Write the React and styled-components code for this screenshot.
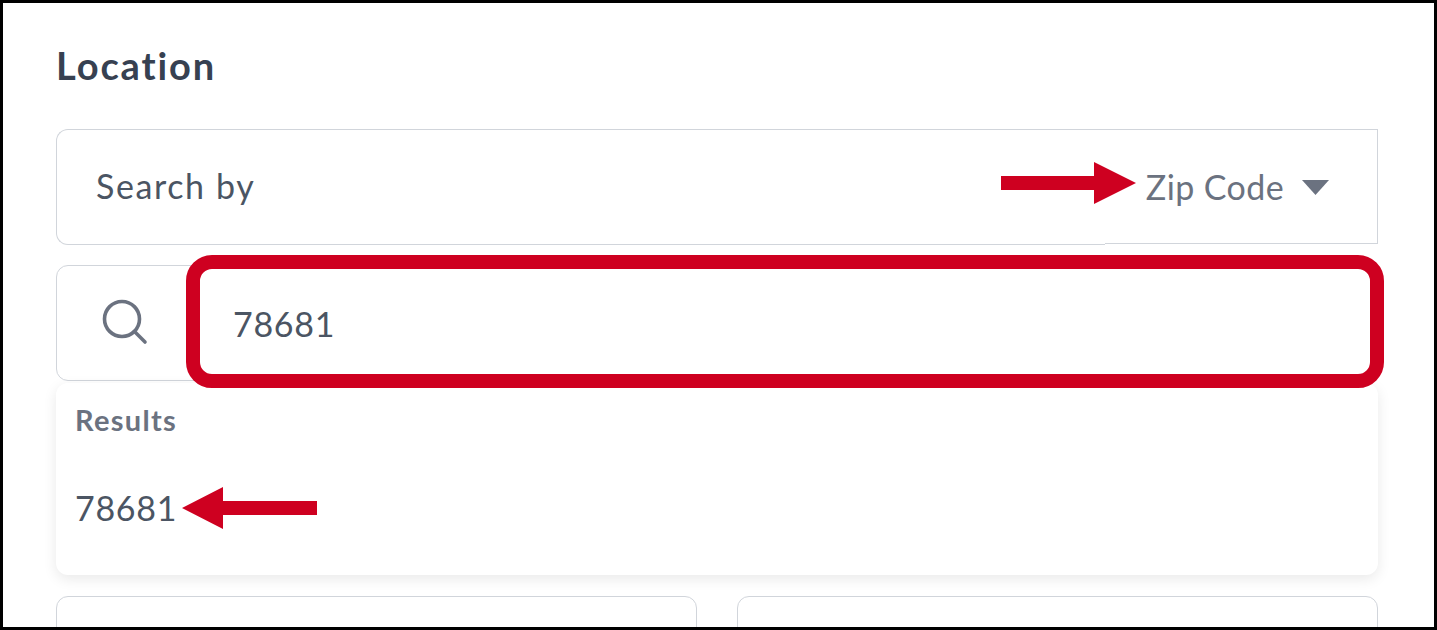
import React from "react";
import styled, { createGlobalStyle } from "styled-components";

const Global = createGlobalStyle`
  html, body { margin: 0; padding: 0; background: #fff; }
  body { font-family: "Lato", "Open Sans", sans-serif; }
`;

const Frame = styled.div`
  position: relative;
  box-sizing: border-box;
  width: 1437px;
  height: 630px;
  border: 3px solid #000;
  background: #fff;
  overflow: hidden;
  padding: 39px 56px 0 53px;
`;

const Heading = styled.h2`
  margin: 0 0 40px;
  height: 47px;
  font-size: 38px;
  line-height: 47px;
  font-weight: 700;
  color: #374151;
  letter-spacing: 1.9px;
`;

const SearchByRow = styled.div`
  display: flex;
  align-items: flex-start;
  height: 116px;
  margin-bottom: 20px;
`;

const SearchByLabel = styled.div`
  box-sizing: border-box;
  width: 1049px;
  height: 116px;
  border: 1.5px solid #d1d5db;
  border-right: none;
  border-radius: 12px 0 0 12px;
  padding: 0 0 3px 39px;
  display: flex;
  align-items: center;
  font-size: 34px;
  letter-spacing: 1.6px;
  color: #4b5563;
`;

const SearchBySelect = styled.div`
  box-sizing: border-box;
  flex: 1;
  height: 115px;
  border: 1.5px solid #d1d5db;
  border-left: none;
  display: flex;
  align-items: center;
  justify-content: flex-end;
  gap: 18px;
  padding: 0 48px 1px 0;
  font-size: 34px;
  letter-spacing: 0.4px;
  color: #6b7280;
`;

const Caret = styled.svg`
  width: 27px;
  height: 15px;
  margin-top: 3px;
  fill: #6b7280;
`;

const SearchRow = styled.div`
  box-sizing: border-box;
  display: flex;
  align-items: center;
  height: 116px;
  border: 1.5px solid #d1d5db;
  border-radius: 12px;
  margin-bottom: 2px;
`;

const SearchIcon = styled.svg`
  width: 52px;
  height: 52px;
  margin-left: 41px;
  margin-right: 83px;
  flex: none;
`;

const SearchValue = styled.div`
  font-size: 34px;
  letter-spacing: 0.7px;
  color: #4b5563;
`;

const Dropdown = styled.div`
  box-sizing: border-box;
  height: 192px;
  background: #fff;
  border-radius: 12px;
  box-shadow: 0 4px 14px rgba(0, 0, 0, 0.09);
  padding: 18px 20px 0 19px;
  margin-bottom: 21px;
  position: relative;
`;

const ResultsLabel = styled.div`
  font-size: 29px;
  line-height: 38px;
  font-weight: 700;
  letter-spacing: 1.3px;
  color: #6b7280;
  margin-bottom: 50px;
`;

const ResultItem = styled.div`
  font-size: 34px;
  line-height: 38px;
  letter-spacing: 0.7px;
  color: #4b5563;
`;

const FieldGrid = styled.div`
  display: grid;
  grid-template-columns: 1fr 1fr;
  gap: 40px;
`;

const Field = styled.div`
  box-sizing: border-box;
  height: 116px;
  border: 1.5px solid #d1d5db;
  border-radius: 12px;
`;

const Highlight = styled.div`
  position: absolute;
  left: 183px;
  top: 252px;
  width: 1198px;
  height: 133px;
  box-sizing: border-box;
  border: 14px solid #ce0020;
  border-radius: 26px;
`;

const Arrow = styled.svg`
  position: absolute;
  left: ${(p) => p.$x}px;
  top: ${(p) => p.$y}px;
  fill: #ce0020;
`;

export default function App() {
  return (
    <>
      <Global />
      <Frame>
        <Heading>Location</Heading>
        <SearchByRow>
          <SearchByLabel>Search by</SearchByLabel>
          <SearchBySelect>
            Zip Code
            <Caret viewBox="0 0 27 15">
              <path d="M0 0H27L13.5 15Z" />
            </Caret>
          </SearchBySelect>
        </SearchByRow>
        <SearchRow>
          <SearchIcon viewBox="0 0 52 52" fill="none" stroke="#6b7280" strokeWidth="3.6" strokeLinecap="round">
            <circle cx="24" cy="22" r="17.5" />
            <path d="M36.5 34.5L47 45" />
          </SearchIcon>
          <SearchValue>78681</SearchValue>
        </SearchRow>
        <Dropdown>
          <ResultsLabel>Results</ResultsLabel>
          <ResultItem>78681</ResultItem>
        </Dropdown>
        <FieldGrid>
          <Field />
          <Field />
        </FieldGrid>
        <Highlight />
        <Arrow $x={998} $y={159} width="135" height="42" viewBox="0 0 135 42">
          <path d="M0 14H93V0L135 21L93 42V28H0Z" />
        </Arrow>
        <Arrow $x={179} $y={484} width="135" height="42" viewBox="0 0 135 42">
          <path d="M135 14H41V0L0 21L41 42V28H135Z" />
        </Arrow>
      </Frame>
    </>
  );
}
